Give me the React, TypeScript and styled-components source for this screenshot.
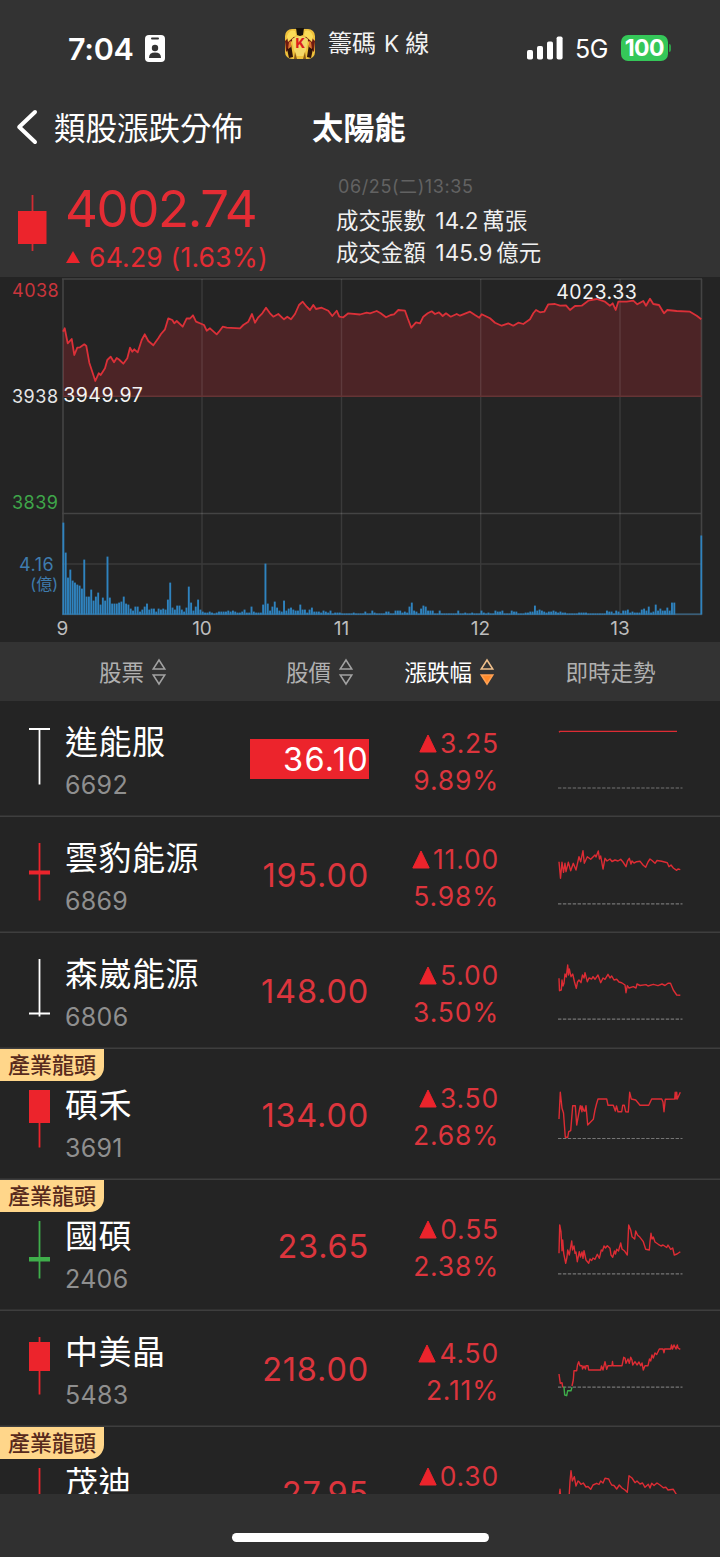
import React from "react";
import styled, { createGlobalStyle } from "styled-components";

const RED = "#ec242c";
const GREEN = "#3fae4b";

type CandleData = {
  color: string;
  top: number;
  height: number;
  wickTop?: number;
};

type Stock = {
  name: string;
  code?: string;
  price: string;
  change: string;
  percent?: string;
  leader?: boolean;
  limitUp?: boolean;
  candle: CandleData;
  base: number;
  lines: { color?: string; points: string }[];
};

const stocks: Stock[] = [
  {
    name: "進能服",
    code: "6692",
    price: "36.10",
    change: "3.25",
    percent: "9.89%",
    limitUp: true,
    candle: { color: "#fff", top: 1, height: 2, wickTop: 1 },
    base: 86.5,
    lines: [{ points: "1,31.2 2,30.4 119,30.4" }],
  },
  {
    name: "雲豹能源",
    code: "6869",
    price: "195.00",
    change: "11.00",
    percent: "5.98%",
    candle: { color: RED, top: 27.5, height: 4 },
    base: 86.3,
    lines: [
      {
        points:
          "1,44.7 2.5,61.3 4,45.3 5.5,55.3 7,46.3 8,54.7 10.3,45.3 12.7,53.7 15.3,46.3 18,53 21,39.7 22.7,44.7 25,33.7 26.3,46.3 29.3,39.7 32.7,42.3 37,38 38,40 40.3,34 41.5,42 42.7,39 45,52 47,41.3 49,44 52,42 54,44.5 57,43 60,44 62.7,42.3 65,45 68,49.7 69.5,44 71.3,41.3 73,47 74,44 76,46 78.7,44.7 82,44.3 85,48 87.7,50.3 90,45 92,42 94,43.5 97,46.3 99,43.5 103.7,44.3 109.3,45.7 111,49.7 113,48 115.3,51 118.7,53.3 120,52 122.3,52.7",
      },
    ],
  },
  {
    name: "森崴能源",
    code: "6806",
    price: "148.00",
    change: "5.00",
    percent: "3.50%",
    candle: { color: "#fff", top: 53.5, height: 2 },
    base: 85.7,
    lines: [
      {
        points:
          "1,45.3 1.5,57.7 3.3,57 4,47 5,53 6,50.3 7,41 8.3,44 9.7,32 10.5,42 11.3,36 13,43.7 14.7,41 16.5,49 18.3,55.3 19.5,49 21,47 23,49.7 24.5,42 26,45 27,39.7 29.3,48.7 31,45 33.7,46 35,43.7 37,46.3 40,42 42.7,49.7 45,45 47,46.3 50,41.3 52,45 53.7,43 56,47 58.7,46.3 61,49 63.7,49.7 67,52 68,59.7 69.3,52.7 71,55 75.3,53.7 78,55 79,51 82,52.5 88,51.6 90,53 95.3,51.3 100,52.7 104,51 107,52.5 110,50.3 112.5,50.3 115.3,57 118.7,62 122.3,62.3",
      },
    ],
  },
  {
    name: "碩禾",
    code: "3691",
    price: "134.00",
    change: "3.50",
    percent: "2.68%",
    leader: true,
    candle: { color: RED, top: 0, height: 33 },
    base: 89,
    lines: [
      {
        points:
          "1,70 2.3,43.3 4,59.3 5.5,64 7.3,88.3 9.7,88.3 10.7,82.7 12.7,81.7 14.7,56.7 17.3,56.7 18.7,76 21.3,61.7 22.3,56.7 24,62.7 24,57 26,62 27,62 28,56.7 29.7,76 35.3,70.3 37,61 38.5,55 40,50 48.7,50 50,56.3 55.3,56.3 57.3,62 58.5,57 60,62.7 63.7,62.7 64.7,56.3 66.3,56.3 67.7,62.7 70.3,63 71.7,43.3 73.3,50 77.7,51 82,56.3 90.7,56.3 93.7,50 103.7,50 105,53 106,62.7 107.3,50.3 116.7,50 117.2,43.3 118,50 118.7,43.3 119.3,50 122.3,43.3",
      },
    ],
  },
  {
    name: "國碩",
    code: "2406",
    price: "23.65",
    change: "0.55",
    percent: "2.38%",
    leader: true,
    candle: { color: GREEN, top: 36, height: 4.5 },
    base: 93.4,
    lines: [
      {
        points:
          "1,73.3 1.7,45 3,52 4,70.7 4.7,60 5.7,73.3 7.7,83.3 9,77 9.7,70 11.3,75 13.7,61 14.5,70 16,66 17,73.3 18,72 19.3,81.7 21.3,71.7 22.5,77 24,72 25,78.3 26,70.7 28,80 30.7,83.3 32,79 33.7,80.5 35,78 37,79.3 39.3,74.3 41.3,78.3 43.3,70 44.5,71 46,66 47.5,68 49.3,65.7 52,68.3 53,75 54.7,77.3 56.5,71 57.5,74 58.7,69.3 60.5,71 62.7,63 64,69 66.3,70.7 69.3,75 70.7,45 72.7,50 74,56.7 76.7,59 77.7,51 79.5,55 82,57.3 85.3,61.7 87.7,69.3 91.3,70 92,62 93,53.3 94,59 95.3,57 97,62 100.3,64.3 103,66 105,65 108.7,67.5 110,65 112.7,69.3 114.7,68 116.3,75 119,74 122.3,71.7",
      },
    ],
  },
  {
    name: "中美晶",
    code: "5483",
    price: "218.00",
    change: "4.50",
    percent: "2.11%",
    candle: { color: RED, top: 5, height: 29 },
    base: 75.7,
    lines: [
      { points: "1,63 2.3,72.3 4,71.7 4.6,75.7 5.3,75.7" },
      {
        color: GREEN,
        points: "5.3,76.3 6,76.3 6.7,84 8.7,84.7 9.7,79.7 13,79.7 14,76.3",
      },
      {
        points:
          "14,75 15.3,69 16,59.7 18.7,59.7 19.5,54 20.7,50.7 22,54.7 24,54.7 24.5,58 26,55 27.5,58 28,54.7 30,54.7 30.7,59 42.7,59 43.5,55 45,59 47,50.7 48.7,58.3 50,54.7 54,54.7 54.5,50.5 55,54.7 64,54.7 65.7,46.3 67,47 68,52.3 70,48 71.3,52.3 72.7,46.3 74,49 74.7,54 77,50.7 79,54 81,51 82.7,54.7 84,52 85.3,59 87,54.7 90,54.7 91.5,48 92.7,50 94,44 95.3,47 97,42 98.7,43.5 101.3,38 105,38 106,41.7 106.7,38 112.7,38 113.5,34 114.5,38 116,34 118,38 119.3,34 120,37 122.3,38.3",
      },
    ],
  },
  {
    name: "茂迪",
    price: "27.95",
    change: "0.30",
    leader: true,
    candle: { color: RED, top: 38, height: 6 },
    base: 84,
    lines: [
      {
        points:
          "1.3,68 2,62.3 3,74 10.3,74 11.3,66.3 12,54 13,43.7 14.3,54 16.3,49.7 18,59 20,54 21.3,55 23,57.3 25.3,56 28,60 30,59.5 32.7,62.3 35,58 38.7,56.3 41,57.5 42.7,54 45,56 47,51.3 50.7,52 52,55 53.7,58 56,58.5 58.7,62 61.3,58 64,61 67,63 69.3,65.3 71,48.7 74,51 77,55.7 79,54 82,57 84.5,56 87,60.3 90.3,57.3 92,61 93.7,56.3 96,58.5 99,56 102,58 105.3,60.7 108,60.3 110,63 115.3,62.3 118.3,67.3 120,72",
      },
    ],
  },
];

const indexLine =
  "63,331.7 64.7,328.3 67.7,343.3 71.7,339 74.3,355 77.3,347.7 80,347.3 84.3,344.3 86.3,346 89.3,362.7 91.7,370 95.3,381 98.7,373.3 100.7,375 105,368.3 107.3,360 110.7,356.7 114,362.3 116.7,358 119,359.5 123.3,363.7 127.3,358.3 130,347.7 132.3,351.7 134.3,349.3 137.7,352.3 141.7,340 144.7,334.3 148.3,341 153.3,345.3 158.3,338.3 161,334 165,329.3 168.3,318.3 172.3,320 174.3,323.3 176.7,321 182.7,326.7 186.7,318.3 190,318.5 193,315.3 196,321.7 201.7,324 204,325 206.7,330.7 210,328.3 216.7,334.3 219,331.7 222.7,326.7 226.7,327.7 240,328.3 243.3,325 248.3,321.7 252,314 255,322.7 258.3,317.3 262.3,313.3 266,307.7 270,313.3 273.3,316.7 278.3,314 284,319.3 287.3,316.7 291,319.3 295,314 299,305 302.7,301.7 306.7,306.7 310,310 313.3,305 316,309 321.7,307.7 328.3,310.7 332.3,316 336.7,310.7 339.3,316.7 343.3,317.3 348.3,313.3 360,314.5 366.7,312.7 370,313.3 376.7,311 380.7,313.3 386,317.3 390.7,315 394,314.3 398.3,310 405,310.7 407.7,318.3 411.3,327.7 416,322.3 420,323.3 423.3,316.7 427.7,313.3 431.7,311.3 435,314 439,312.3 442.7,316 446,313.3 450.7,316.7 456.7,314 460,315.7 470,311.7 475,315 479.3,317.7 481.7,314.3 490,318.3 495,322.7 501.7,325.7 508.3,323.3 513.3,325.7 518.3,322.7 523.3,324 530,319.3 533.3,313.3 536,310 540,312.3 544.3,311.7 548.3,304.3 555,304 560,305.7 566,305.3 570,310 575,306 581.7,305.7 588.3,300.7 596.7,299 605,301.7 610,305.7 612.7,303.3 615.7,310 618.3,301.7 626.7,301.7 633.3,300.7 637.3,304.3 643.3,301 646,305.7 650,298.7 653.3,304 659,305 664,313.3 667.3,310 676.7,311 690,311.7 696.7,315.7 701.3,319.3";

// turnover per minute from 9:00, drawn from the bottom axis up
const volumes = [
  92, 62, 37, 45, 34, 32, 30, 29, 26, 55, 18, 18, 25, 14, 18, 22, 10, 17, 14,
  58, 17, 11, 11, 11, 12, 13, 18, 11, 10, 6, 4, 8, 8, 3, 5, 8, 11, 5, 6, 6, 3,
  6, 5, 6, 5, 15, 32, 7, 5, 9, 9, 5, 3, 7, 28, 12, 4, 8, 15, 5, 3, 2, 2, 3, 2,
  1, 2, 3, 3, 3, 3, 4, 3, 4, 3, 2, 2, 3, 5, 2, 2, 8, 3, 2, 2, 2, 10, 51, 11, 4,
  8, 13, 7, 4, 3, 14, 4, 6, 7, 5, 4, 4, 10, 5, 5, 2, 5, 7, 3, 3, 3, 2, 4, 3, 2,
  4, 1, 2, 2, 2, 1, 1, 1, 1, 1, 2, 1, 1, 1, 1, 3, 1, 1, 4, 2, 1, 1, 1, 1, 3, 3,
  1, 1, 4, 4, 4, 2, 3, 2, 8, 12, 4, 3, 1, 6, 9, 8, 4, 4, 4, 1, 1, 4, 1, 1, 1, 1,
  1, 1, 1, 4, 1, 1, 2, 1, 1, 2, 1, 1, 1, 4, 2, 1, 2, 1, 1, 4, 3, 3, 4, 1, 1, 1,
  4, 3, 3, 1, 1, 1, 2, 2, 3, 3, 9, 4, 5, 4, 3, 2, 3, 3, 4, 3, 2, 3, 2, 2, 1, 1,
  1, 1, 1, 2, 2, 2, 2, 1, 1, 1, 1, 1, 1, 1, 1, 4, 3, 3, 1, 4, 3, 1, 4, 4, 5, 2,
  3, 2, 2, 2, 5, 6, 4, 8, 2, 3, 10, 4, 6, 4, 4, 7, 4, 12, 12,
];

const hours = [
  { label: "9", x: 62.5 },
  { label: "10", x: 202 },
  { label: "11", x: 341.5 },
  { label: "12", x: 480.5 },
  { label: "13", x: 620 },
];

function AppIcon() {
  return (
    <svg width="32" height="32" viewBox="0 0 32 32">
      <rect x="1" y="1" width="30" height="30" rx="7" fill="#f0c23c" />
      <path d="M1 13L6 8 11 9 7 14 4 22 2 24Z" fill="#6e1a10" />
      <path d="M31 13L26 8 21 9 25 14 28 22 30 24Z" fill="#6e1a10" />
      <path d="M3 8Q6 1 11 3L12 7 4 14Z" fill="#fbdc58" />
      <path d="M29 8Q26 1 21 3L20 7 28 14Z" fill="#fbdc58" />
      <path d="M12 0H20L19 7 16 8 13 7Z" fill="#17120c" />
      <path d="M8 11Q16 5 24 11L22 22 19 28H13L10 22Z" fill="#f3d768" />
      <path d="M3 21L7 16 9 29 5 30Z" fill="#2f1409" />
      <path d="M29 21L25 16 23 29 27 30Z" fill="#2f1409" />
      <path d="M5 14L7 13 7 19 4 21Z" fill="#e0752f" />
      <path d="M27 14L25 13 25 19 28 21Z" fill="#e0752f" />
      <path d="M11 24L13 31H10ZM21 24L19 31H22Z" fill="#8a5a16" />
      <text
        x="16.3"
        y="20"
        textAnchor="middle"
        fontSize="13"
        fontWeight="800"
        fontFamily="Inter, sans-serif"
        fill="#dc1d1d"
      >
        K
      </text>
    </svg>
  );
}

function IdBadge() {
  return (
    <svg width="20" height="27" viewBox="0 0 20 27">
      <rect width="20" height="27" rx="4" fill="#fff" />
      <rect x="6" y="2.6" width="8" height="2" rx="1" fill="#333" />
      <circle cx="10" cy="13" r="3.2" fill="#333" />
      <path d="M4 23Q4 17.6 10 17.6T16 23Z" fill="#333" />
    </svg>
  );
}

function SortIcon({ active }: { active?: boolean }) {
  return (
    <svg width="16" height="28" viewBox="0 0 16 28">
      <path
        d="M8 2L13.8 11H2.2Z"
        fill="none"
        stroke={active ? "#f0c08c" : "#a2a2a2"}
        strokeWidth="1.5"
      />
      <path
        d="M8 26L2.2 17H13.8Z"
        fill={active ? "#ff8a2b" : "none"}
        stroke={active ? "#ffa052" : "#a2a2a2"}
        strokeWidth="1.5"
      />
    </svg>
  );
}

function Candle({ color, top, height, wickTop = 0 }: CandleData) {
  return (
    <svg width="21" height="58" viewBox="0 0 21 58">
      <rect x="9.6" y={wickTop} width="1.8" height={57.5 - wickTop} fill={color} />
      <rect x="0" y={top} width="21" height={height} fill={color} />
    </svg>
  );
}

function IndexChart() {
  return (
    <ChartArea>
      <svg width="720" height="365" viewBox="0 277 720 365">
        <polygon points={`63,396 ${indexLine} 701.3,396`} fill="#4c2426" />
        <g stroke="#fff" strokeOpacity="0.15" strokeWidth="1.6">
          <path d="M62 279H702M62 513.5H702M62 614.4H702M63 279V615M701.5 279V615" />
        </g>
        <g stroke="#fff" strokeOpacity="0.1" strokeWidth="1.4">
          <path d="M202 279V614M341.5 279V614M480.7 279V614M620 279V614M62 564H702" />
        </g>
        <path d="M63 396.2H702" stroke="#653435" strokeWidth="1.5" />
        <polyline
          points={indexLine}
          fill="none"
          stroke="#db3038"
          strokeWidth="1.8"
          strokeLinejoin="round"
        />
        <g fill="#2f83bf">
          {volumes.map((v, i) => (
            <rect key={i} x={62.4 + i * 2.323} y={614.6 - v} width="1.9" height={v} />
          ))}
          <rect x="700.4" y="535.5" width="1.8" height="79" />
          <rect x="62.4" y="613.6" width="639" height="1" fillOpacity="0.7" />
        </g>
        <AxisText x="12" y="296.6" fill="#c9353c">
          4038
        </AxisText>
        <AxisText x="12" y="402.8" fill="#e6e6e6">
          3938
        </AxisText>
        <AxisText x="12" y="509.4" fill="#3fa64a">
          3839
        </AxisText>
        <AxisText x="19" y="570.8" fill="#3f7cae">
          4.16
        </AxisText>
        <AxisText $small x="58" y="590" textAnchor="end" fill="#3f7cae">
          (億)
        </AxisText>
        <PriceTag x="63.2" y="402.4">
          3949.97
        </PriceTag>
        <PriceTag x="556.2" y="298.6">
          4023.33
        </PriceTag>
        {hours.map((h) => (
          <HourText key={h.label} x={h.x} y="634.8">
            {h.label}
          </HourText>
        ))}
      </svg>
    </ChartArea>
  );
}

function StockRow({ stock }: { stock: Stock }) {
  const height = stock.leader ? 131 : 116;
  return (
    <Row $leader={stock.leader}>
      {stock.leader && <LeaderTag>產業龍頭</LeaderTag>}
      <StockCell $leader={stock.leader}>
        <Candle {...stock.candle} />
        <div>
          <StockName>{stock.name}</StockName>
          <StockCode>{stock.code}</StockCode>
        </div>
      </StockCell>
      <Price $limitUp={stock.limitUp}>{stock.price}</Price>
      <Change>
        <ChangeLine>
          <svg width="18" height="19" viewBox="0 0 18 19">
            <path d="M9 1L17.2 18H0.8Z" fill={RED} stroke={RED} strokeLinejoin="round" />
          </svg>
          {stock.change}
        </ChangeLine>
        <ChangeLine>{stock.percent}</ChangeLine>
      </Change>
      <Trend>
        <svg width="125" height={height} viewBox={`0 0 125 ${height}`}>
          <path
            d={`M0 ${stock.base + 0.5}H124.5`}
            stroke="#757575"
            strokeWidth="1.2"
            strokeDasharray="3.4 1.5"
          />
          {stock.lines.map((line, i) => (
            <polyline
              key={i}
              points={line.points}
              fill="none"
              stroke={line.color || "#dd2c34"}
              strokeWidth="1.4"
              strokeLinejoin="round"
            />
          ))}
        </svg>
      </Trend>
    </Row>
  );
}

function App() {
  return (
    <Screen>
      <GlobalStyle />
      <StatusBar>
        <Clock>
          7:04
          <IdBadge />
        </Clock>
        <AppName>
          <AppIcon />
          <span>籌碼</span>
          <AppLetter>K</AppLetter>
          <span>線</span>
        </AppName>
        <Signal>
          <svg width="36" height="24" viewBox="0 0 36 24" fill="#fff">
            <rect x="0" y="14" width="6" height="9.5" rx="1.8" />
            <rect x="10" y="10" width="6" height="13.5" rx="1.8" />
            <rect x="20" y="5.5" width="6" height="18" rx="1.8" />
            <rect x="29.6" y="0.5" width="6" height="23" rx="1.8" />
          </svg>
          <Network>5G</Network>
          <Battery>100</Battery>
          <BatteryTip />
        </Signal>
      </StatusBar>
      <NavBar>
        <svg width="22" height="38" viewBox="0 0 22 38">
          <path
            d="M19 3L3.2 18 19 33"
            fill="none"
            stroke="#fff"
            strokeWidth="4"
            strokeLinecap="round"
            strokeLinejoin="round"
          />
        </svg>
        <BackTitle>類股漲跌分佈</BackTitle>
        <PageTitle>太陽能</PageTitle>
      </NavBar>
      <Summary>
        <svg width="29" height="57" viewBox="0 0 29 57">
          <rect x="13.6" y="0" width="1.8" height="56" fill="#d12c33" />
          <rect x="0" y="16" width="28.5" height="33" fill={RED} />
        </svg>
        <IndexBlock>
          <IndexValue>4002.74</IndexValue>
          <IndexChange>
            <svg width="14" height="12" viewBox="0 0 14 12">
              <path d="M7 0L14 12H0Z" fill={RED} />
            </svg>
            64.29 (1.63%)
          </IndexChange>
        </IndexBlock>
        <InfoBlock>
          <InfoDate>06/25(二)13:35</InfoDate>
          <InfoLine>
            成交張數<b>14.2</b>萬張
          </InfoLine>
          <InfoLine>
            成交金額<b>145.9</b>億元
          </InfoLine>
        </InfoBlock>
      </Summary>
      <IndexChart />
      <TableHead>
        <HeadCell $indent={99}>
          <span>股票</span>
          <SortIcon />
        </HeadCell>
        <HeadCell $indent={36}>
          <span>股價</span>
          <SortIcon />
        </HeadCell>
        <HeadCell $indent={35.5} $active>
          <span>漲跌幅</span>
          <SortIcon active />
        </HeadCell>
        <HeadCell $indent={66.5}>
          <span>即時走勢</span>
        </HeadCell>
      </TableHead>
      <StockList>
        {stocks.map((stock) => (
          <StockRow key={stock.name} stock={stock} />
        ))}
      </StockList>
      <HomeArea>
        <HomeIndicator />
      </HomeArea>
    </Screen>
  );
}

export default App;

const GlobalStyle = createGlobalStyle`
  * {
    box-sizing: border-box;
  }

  body {
    margin: 0;
    background-color: #242424;
    font-family: Inter, "Noto Sans CJK TC", sans-serif;
  }

  svg {
    display: block;
    flex-shrink: 0;
  }
`;

const Screen = styled.div`
  display: flex;
  flex-direction: column;
  width: 720px;
  height: 1557px;
  overflow: hidden;
  background-color: #333;
  color: #fff;
  white-space: nowrap;
`;

const StatusBar = styled.div`
  display: flex;
  height: 88px;
  padding-left: 68px;
`;

const Clock = styled.div`
  display: flex;
  align-items: center;
  gap: 11px;
  width: 216px;
  height: 40px;
  margin-top: 28px;
  font-size: 30.5px;
  font-weight: 600;
  letter-spacing: -0.3px;
`;

const AppName = styled.div`
  display: flex;
  align-items: center;
  width: 243px;
  height: 32px;
  margin-top: 28px;
  font-size: 24px;
  line-height: 32px;
  color: #f2f2f2;

  & > svg {
    margin-right: 12px;
  }
`;

const AppLetter = styled.span`
  margin: 0 6px 0 8px;
  font-size: 22.5px;
`;

const Signal = styled.div`
  display: flex;
  align-items: center;
  height: 40px;
  margin-top: 28px;
`;

const Network = styled.span`
  margin: 2px 13px 0 12px;
  font-size: 25px;
  letter-spacing: -0.5px;
`;

const Battery = styled.div`
  width: 47px;
  height: 26px;
  border-radius: 7px;
  background-color: #35c759;
  font-size: 23px;
  font-weight: 700;
  line-height: 26px;
  text-align: center;
  letter-spacing: -0.6px;
`;

const BatteryTip = styled.div`
  width: 2px;
  height: 8px;
  margin-left: 1px;
  border-radius: 0 3px 3px 0;
  background-color: #2f9c49;
`;

const NavBar = styled.div`
  display: flex;
  align-items: center;
  height: 80px;
  padding-left: 16px;
`;

const BackTitle = styled.div`
  width: 258px;
  margin: 2px 0 0 16px;
  font-size: 31.5px;
  line-height: 40px;
`;

const PageTitle = styled.div`
  font-size: 31.2px;
  font-weight: 700;
  line-height: 40px;
`;

const Summary = styled.div`
  display: flex;
  height: 109px;
  padding-left: 18px;

  & > svg {
    margin-top: 27px;
  }
`;

const IndexBlock = styled.div`
  width: 271px;
  padding: 13px 0 0 18px;
  color: #e42c34;
`;

const IndexValue = styled.div`
  font-size: 51px;
  line-height: 56px;
  letter-spacing: -1.4px;
`;

const IndexChange = styled.div`
  display: flex;
  align-items: center;
  gap: 9px;
  margin-left: 1px;
  font-size: 26.5px;
  line-height: 40px;
  letter-spacing: 0.2px;
`;

const InfoBlock = styled.div`
  padding: 7px 0 0 18px;
`;

const InfoDate = styled.div`
  margin: 0 0 6px 2px;
  font-size: 18px;
  line-height: 24px;
  letter-spacing: 0.6px;
  color: #626262;
`;

const InfoLine = styled.div`
  font-size: 22.4px;
  line-height: 31.5px;
  color: #f0f0f0;

  & > b {
    margin: 0 4px 0 10px;
    font-weight: 400;
  }
`;

const ChartArea = styled.div`
  height: 365px;
  background-color: #242424;
`;

const AxisText = styled.text<{ $small?: boolean }>`
  font-size: ${(props) => (props.$small ? 16 : 18)}px;
  letter-spacing: ${(props) => (props.$small ? 0 : 0.5)}px;
`;

const PriceTag = styled.text`
  font-size: 19.5px;
  letter-spacing: 0.5px;
  fill: #f4f4f4;
`;

const HourText = styled.text`
  font-size: 19px;
  text-anchor: middle;
  fill: #bdbdbd;
`;

const TableHead = styled.div`
  display: grid;
  grid-template-columns: 250px 119px 130px 1fr;
  align-items: center;
  height: 59px;
  flex-shrink: 0;
`;

const HeadCell = styled.div<{ $indent: number; $active?: boolean }>`
  display: flex;
  align-items: center;
  gap: 7px;
  padding-left: ${(props) => props.$indent}px;
  font-size: 22.5px;
  line-height: 30px;
  color: ${(props) => (props.$active ? "#fff" : "#b0b0b0")};

  & > span {
    padding-top: 2px;
  }
`;

const StockList = styled.div`
  height: 793px;
  overflow: hidden;
  background-color: #242424;
`;

const Row = styled.div<{ $leader?: boolean }>`
  position: relative;
  display: grid;
  grid-template-columns: 250px 119px 130px 1fr;
  height: ${(props) => (props.$leader ? 131 : 116)}px;
  box-shadow: inset 0 -1.5px #3e3e3e;
`;

const LeaderTag = styled.div`
  position: absolute;
  top: 0;
  left: 0;
  width: 104px;
  height: 32px;
  padding-left: 8px;
  border-radius: 0 0 14px 0;
  background-color: #ffd68a;
  color: #572a1c;
  font-size: 22px;
  font-weight: 500;
  line-height: 33px;
`;

const StockCell = styled.div<{ $leader?: boolean }>`
  display: flex;
  gap: 15px;
  padding: ${(props) => (props.$leader ? 41 : 26)}px 0 0 29px;
`;

const StockName = styled.div`
  margin-top: -7px;
  font-size: 33px;
  line-height: 44px;
  letter-spacing: 0.5px;
`;

const StockCode = styled.div`
  margin-top: 5px;
  font-size: 25px;
  line-height: 32px;
  letter-spacing: 0.3px;
  color: #8f8f8f;
`;

const Price = styled.div<{ $limitUp?: boolean }>`
  align-self: center;
  height: 40px;
  background-color: ${(props) => (props.$limitUp ? RED : "transparent")};
  color: ${(props) => (props.$limitUp ? "#fff" : "#dc353d")};
  font-size: 32.5px;
  line-height: 41.5px;
  letter-spacing: ${(props) => (props.$limitUp ? 1.3 : 0.8)}px;
  text-align: right;
`;

const Change = styled.div`
  align-self: center;
  margin-top: 5px;
  color: #dc353d;
`;

const ChangeLine = styled.div`
  display: flex;
  align-items: center;
  justify-content: flex-end;
  gap: 3px;
  height: 37px;
  font-size: 26.5px;
  line-height: 37px;
  letter-spacing: 0.8px;
`;

const Trend = styled.div`
  padding-left: 59px;
`;

const HomeArea = styled.div`
  flex: 1;
  padding-top: 39px;
  background-color: #303030;
`;

const HomeIndicator = styled.div`
  width: 257px;
  height: 9px;
  margin: 0 auto;
  border-radius: 5px;
  background-color: #fff;
`;
